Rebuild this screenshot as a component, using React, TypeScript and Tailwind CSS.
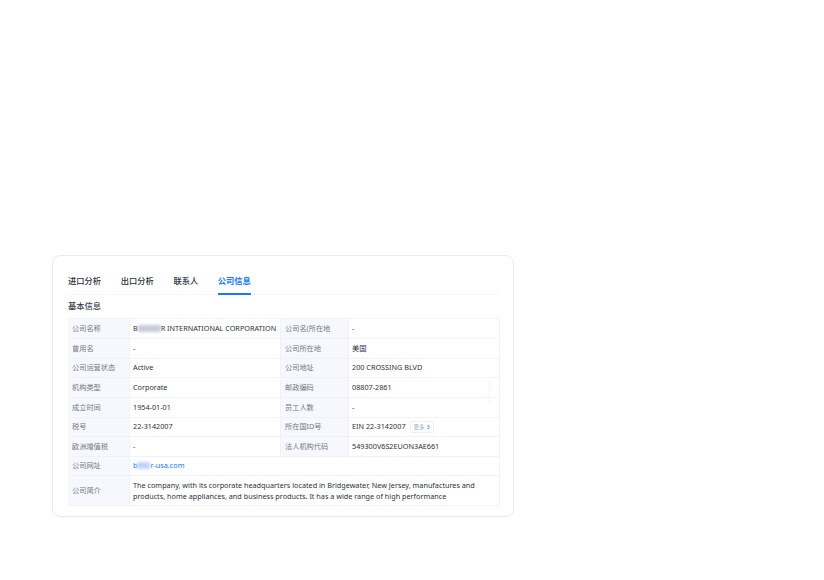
import React from "react";

const font = { fontFamily: '"Noto Sans", "Noto Sans CJK SC", sans-serif' };

function Label({ children }: { children: React.ReactNode }) {
  return (
    <div className="flex items-center bg-[#f6f8fd] pl-1 text-[7.2px] text-[#737986] border-b border-[#f0f2f7] overflow-hidden whitespace-nowrap">
      {children}
    </div>
  );
}

function Value({ children, span = false }: { children: React.ReactNode; span?: boolean }) {
  return (
    <div className={`flex items-center pl-[3px] text-[7.25px] text-[#2b3040] border-b border-l border-r border-[#f0f2f7] whitespace-nowrap ${span ? "col-span-3" : ""}`}>
      {children}
    </div>
  );
}

const Blob = ({ w, color }: { w: string; color: string }) => (
  <span className={`inline-block shrink-0 h-[7px] blur-[1.5px] ${w} ${color}`} />
);

export default function App() {
  return (
    <div className="w-[824px] h-[580px] bg-white pt-[255px] pl-[52px]" style={font}>
      <div className="w-[462px] h-[262px] rounded-[8px] border border-[#e8eaf2] bg-white px-[15px] pt-[17px]">
        <div className="flex gap-[19.7px] h-[22px] border-b border-[#f5f6fa] text-[8.25px] font-medium text-[#2b3040]">
          <div className="pt-[2px]">进口分析</div>
          <div className="pt-[2px]">出口分析</div>
          <div className="pt-[2px]">联系人</div>
          <div className="pt-[2px] h-[22px] border-b-2 border-[#1677ff] text-[#1677ff] font-semibold">公司信息</div>
        </div>
        <div className="h-[23px] flex items-center text-[8.25px] font-medium text-[#3a3f4d]">基本信息</div>
        <div className="relative grid grid-cols-[61px_152px_67px_152px] grid-rows-[20px_19.5px_19.5px_20px_19.5px_19.5px_19.5px_19.5px_30px] w-[432px] border-t border-[#f0f2f7] border-r">
          <Label>公司名称</Label>
          <Value>
            B
            <Blob w="w-[23px]" color="bg-[#c9ccd6]" />R INTERNATIONAL CORPORATION
          </Value>
          <Label>公司名(所在地</Label>
          <Value>-</Value>

          <Label>曾用名</Label>
          <Value>-</Value>
          <Label>公司所在地</Label>
          <Value>美国</Value>

          <Label>公司运营状态</Label>
          <Value>Active</Value>
          <Label>公司地址</Label>
          <Value>200 CROSSING BLVD</Value>

          <Label>机构类型</Label>
          <Value>Corporate</Value>
          <Label>邮政编码</Label>
          <Value>08807-2861</Value>

          <Label>成立时间</Label>
          <Value>1954-01-01</Value>
          <Label>员工人数</Label>
          <Value>-</Value>

          <Label>税号</Label>
          <Value>22-3142007</Value>
          <Label>所在国ID号</Label>
          <Value>
            EIN 22-3142007
            <span className="ml-[4px] flex h-[12px] items-center gap-[2px] rounded-[2px] border border-[#eef0f6] px-[3px] text-[5.5px] text-[#a3a9b6]">
              更多 <span className="text-[#1677ff]">3</span>
            </span>
          </Value>

          <Label>欧洲增值税</Label>
          <Value>-</Value>
          <Label>法人机构代码</Label>
          <Value>549300V6S2EUON3AE661</Value>

          <Label>公司网址</Label>
          <Value span>
            <span className="text-[#1677ff]">b</span>
            <Blob w="w-[13px]" color="bg-[#bcd6fb]" />
            <span className="text-[#1677ff]">r-usa.com</span>
          </Value>

          <Label>公司简介</Label>
          <div className="col-span-3 flex items-center pl-[3px] text-[7.25px] leading-[11px] text-[#2b3040] border-b border-l border-[#f0f2f7] whitespace-nowrap">
            <div>
              The company, with its corporate headquarters located in Bridgewater, New Jersey, manufactures and
              <br />
              products, home appliances, and business products. It has a wide range of high performance
            </div>
          </div>
          <div className="absolute left-[420px] top-[62px] w-[3px] h-[22px] rounded-full bg-[#f7f8fc] blur-[1px]" />
        </div>
      </div>
    </div>
  );
}
